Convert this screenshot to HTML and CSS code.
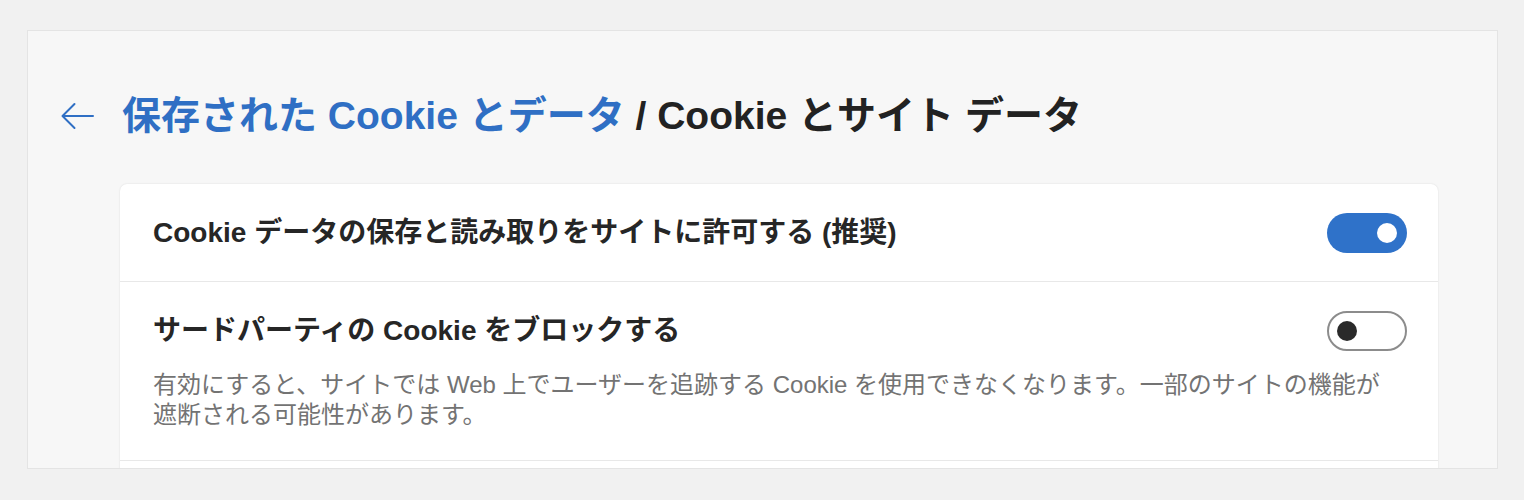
FILE: index.html
```html
<!DOCTYPE html>
<html lang="ja">
<head>
<meta charset="utf-8">
<title>Cookie とサイト データ</title>
<link rel="stylesheet" href="styles.css">
</head>
<body>
<div class="panel">
  <div class="header">
    <svg class="back" width="34" height="28" viewBox="0 0 34 28" aria-hidden="true">
      <path d="M33 14 H2.5 M14.5 2 L2.5 14 L14.5 26" fill="none" stroke="#2f6fc4" stroke-width="2" stroke-linecap="round" stroke-linejoin="round"/>
    </svg>
    <h1 class="title"><span class="crumb">保存された Cookie とデータ</span> / Cookie とサイト データ</h1>
  </div>
  <div class="card">
    <div class="row row-simple">
      <div class="row-title">Cookie データの保存と読み取りをサイトに許可する (推奨)</div>
      <div class="toggle on"><span class="knob"></span></div>
    </div>
    <div class="row row-detail">
      <div class="row-head">
        <div class="row-title">サードパーティの Cookie をブロックする</div>
        <div class="toggle off"><span class="knob"></span></div>
      </div>
      <p class="desc">有効にすると、サイトでは Web 上でユーザーを追跡する Cookie を使用できなくなります。一部のサイトの機能が遮断される可能性があります。</p>
    </div>
    <div class="row row-simple row-next"></div>
  </div>
</div>
</body>
</html>
```

FILE: styles.css
```css
html, body {
  margin: 0;
  padding: 0;
  background: #f1f1f1;
}

body {
  font-family: "Liberation Sans", "Noto Sans CJK JP", sans-serif;
  color: #262626;
}

.panel {
  box-sizing: border-box;
  margin: 30px 0 0 27px;
  width: 1471px;
  height: 439px;
  background: #f7f7f7;
  border: 1px solid #e4e4e4;
  overflow: hidden;
}

.header {
  display: flex;
  align-items: center;
  gap: 28px;
  height: 60px;
  margin-top: 55px;
  padding-left: 32px;
}

.back {
  display: block;
  flex: none;
}

.title {
  margin: 0;
  font-size: 39px;
  font-weight: 700;
  line-height: 60px;
  color: #222222;
  white-space: nowrap;
}

.crumb {
  color: #2f6fc4;
}

.card {
  margin: 38px 0 0 92px;
  width: 1318px;
  background: #ffffff;
  border-radius: 7px 7px 0 0;
  box-shadow: 0 0 2px rgba(0, 0, 0, 0.12);
}

.row {
  box-sizing: border-box;
  padding: 0 31px 0 33px;
  border-bottom: 1px solid #e8e8e8;
}

.row-simple {
  display: flex;
  align-items: center;
  justify-content: space-between;
  height: 98px;
}

.row-detail {
  padding-top: 29px;
  padding-bottom: 30px;
  height: 179px;
}

.row-head {
  display: flex;
  align-items: center;
  justify-content: space-between;
  height: 40px;
}

.row-title {
  font-size: 28px;
  font-weight: 700;
  line-height: 40px;
  color: #262626;
  white-space: nowrap;
}

.desc {
  margin: 19px 0 0 0;
  padding-right: 14px;
  font-size: 24px;
  line-height: 30px;
  color: #737373;
}

.toggle {
  box-sizing: border-box;
  flex: none;
  display: flex;
  align-items: center;
  width: 80px;
  height: 40px;
  border-radius: 20px;
}

.toggle .knob {
  display: block;
  width: 20px;
  height: 20px;
  border-radius: 50%;
}

.toggle.on {
  background: #2f72c9;
  justify-content: flex-end;
  padding-right: 10px;
}

.toggle.on .knob {
  background: #ffffff;
}

.toggle.off {
  background: #ffffff;
  border: 2px solid #8c8c8c;
  justify-content: flex-start;
  padding-left: 8px;
}

.toggle.off .knob {
  background: #2a2a2a;
}
```
